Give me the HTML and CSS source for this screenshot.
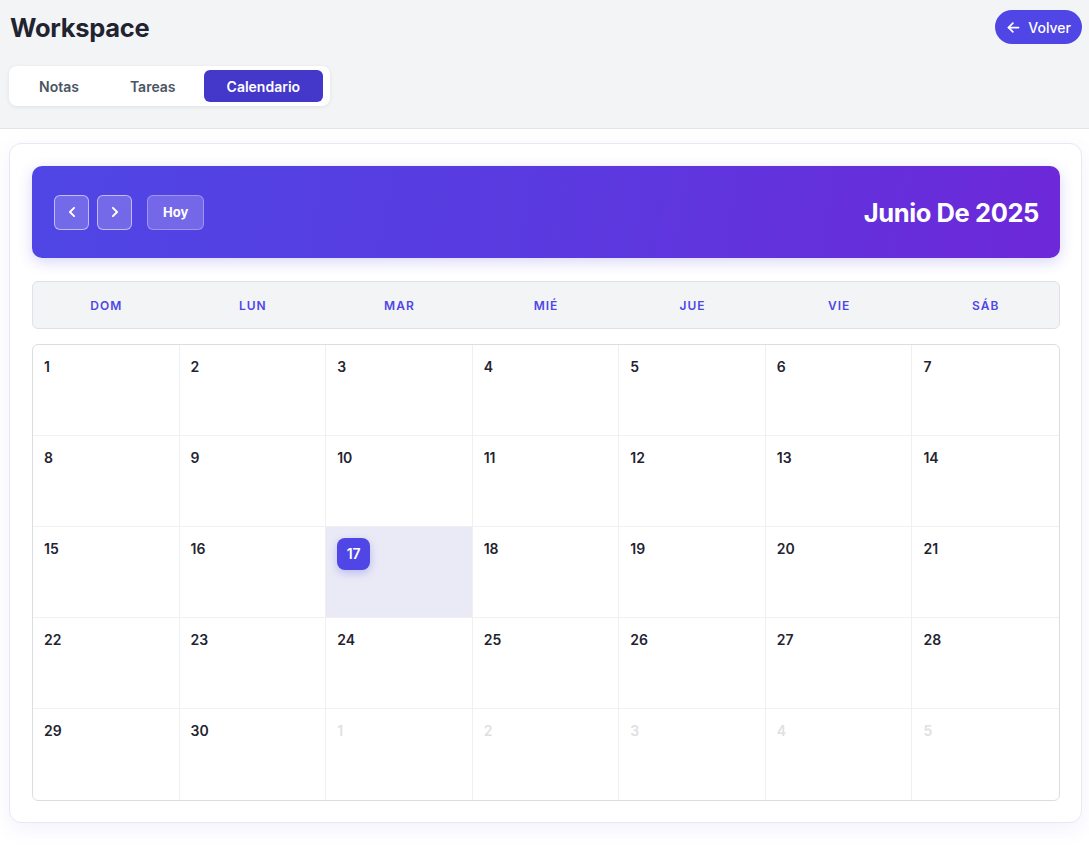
FILE: index.html
```html
<!DOCTYPE html>
<html lang="es">
<head>
<meta charset="utf-8">
<title>Workspace</title>
<link rel="stylesheet" href="styles.css">
</head>
<body>
<header class="top">
  <div class="top-row">
    <h1 class="title">Workspace</h1>
    <button class="back">
      <svg width="15" height="15" viewBox="0 0 24 24" fill="none" stroke="currentColor" stroke-width="2.8" stroke-linecap="round" stroke-linejoin="round"><path d="M20 12H4"/><path d="M11 19l-7-7 7-7"/></svg>
      <span>Volver</span>
    </button>
  </div>
  <nav class="tabs">
    <button class="tab">Notas</button>
    <button class="tab">Tareas</button>
    <button class="tab active">Calendario</button>
  </nav>
</header>

<main class="main">
  <section class="card">
    <div class="cal-head">
      <div class="controls">
        <button class="nav-btn" aria-label="Anterior">
          <svg width="20" height="20" viewBox="0 0 24 24" fill="none" stroke="currentColor" stroke-width="2.3" stroke-linecap="round" stroke-linejoin="round"><path d="M14.5 17l-5-5 5-5"/></svg>
        </button>
        <button class="nav-btn" aria-label="Siguiente">
          <svg width="20" height="20" viewBox="0 0 24 24" fill="none" stroke="currentColor" stroke-width="2.3" stroke-linecap="round" stroke-linejoin="round"><path d="M9.5 17l5-5-5-5"/></svg>
        </button>
        <button class="today-btn">Hoy</button>
      </div>
      <h2 class="month">Junio De 2025</h2>
    </div>

    <div class="weekdays">
      <div>DOM</div><div>LUN</div><div>MAR</div><div>MIÉ</div><div>JUE</div><div>VIE</div><div>SÁB</div>
    </div>

    <div class="grid">
      <div class="cell"><span class="num">1</span></div>
      <div class="cell"><span class="num">2</span></div>
      <div class="cell"><span class="num">3</span></div>
      <div class="cell"><span class="num">4</span></div>
      <div class="cell"><span class="num">5</span></div>
      <div class="cell"><span class="num">6</span></div>
      <div class="cell"><span class="num">7</span></div>

      <div class="cell"><span class="num">8</span></div>
      <div class="cell"><span class="num">9</span></div>
      <div class="cell"><span class="num">10</span></div>
      <div class="cell"><span class="num">11</span></div>
      <div class="cell"><span class="num">12</span></div>
      <div class="cell"><span class="num">13</span></div>
      <div class="cell"><span class="num">14</span></div>

      <div class="cell"><span class="num">15</span></div>
      <div class="cell"><span class="num">16</span></div>
      <div class="cell is-today"><span class="num badge">17</span></div>
      <div class="cell"><span class="num">18</span></div>
      <div class="cell"><span class="num">19</span></div>
      <div class="cell"><span class="num">20</span></div>
      <div class="cell"><span class="num">21</span></div>

      <div class="cell"><span class="num">22</span></div>
      <div class="cell"><span class="num">23</span></div>
      <div class="cell"><span class="num">24</span></div>
      <div class="cell"><span class="num">25</span></div>
      <div class="cell"><span class="num">26</span></div>
      <div class="cell"><span class="num">27</span></div>
      <div class="cell"><span class="num">28</span></div>

      <div class="cell"><span class="num">29</span></div>
      <div class="cell"><span class="num">30</span></div>
      <div class="cell other"><span class="num">1</span></div>
      <div class="cell other"><span class="num">2</span></div>
      <div class="cell other"><span class="num">3</span></div>
      <div class="cell other"><span class="num">4</span></div>
      <div class="cell other"><span class="num">5</span></div>
    </div>
  </section>
</main>
</body>
</html>
```

FILE: styles.css
```css
* { box-sizing: border-box; }

html, body {
  margin: 0;
  padding: 0;
  background: #ffffff;
  font-family: Inter, "Noto Sans", "Liberation Sans", sans-serif;
  color: #1f2937;
}

button {
  font-family: inherit;
  cursor: pointer;
}

.top {
  background: #f3f4f6;
  border-bottom: 1px solid #e2e4e9;
  padding: 10px 7px 22px 9px;
}

.top-row {
  display: flex;
  align-items: center;
  justify-content: space-between;
  height: 34px;
}

.title {
  margin: 0 0 0 1px;
  font-size: 25.5px;
  font-weight: 700;
  color: #1f2430;
  letter-spacing: -0.3px;
}

.back {
  display: flex;
  align-items: center;
  gap: 7px;
  height: 34px;
  padding: 0 11px 0 11px;
  border: none;
  border-radius: 17px;
  background: #4f46e5;
  color: #ffffff;
  font-size: 14px;
  font-weight: 500;
}

.tabs {
  display: inline-flex;
  gap: 5px;
  margin-top: 22px;
  padding: 4px 7px 4px 7px;
  background: #ffffff;
  border-radius: 8px;
  box-shadow: 0 1px 4px rgba(0, 0, 0, 0.08);
}

.tab {
  height: 32px;
  padding: 0 23px;
  border: none;
  border-radius: 6px;
  background: transparent;
  color: #4b5563;
  font-size: 14px;
  font-weight: 600;
}

.tab.active {
  background: #4338ca;
  color: #ffffff;
}

.main {
  padding: 14px 7px 30px 9px;
}

.card {
  background: #ffffff;
  border: 1px solid #e8e8f4;
  border-radius: 12px;
  padding: 22px 21px 21px 22px;
  box-shadow: 0 6px 20px rgba(99, 91, 230, 0.08);
}

.cal-head {
  display: flex;
  align-items: center;
  justify-content: space-between;
  height: 92px;
  padding: 0 21px 0 22px;
  border-radius: 10px;
  background: linear-gradient(100deg, #4f46e5 0%, #5a3ae0 50%, #6d28d9 100%);
  box-shadow: 0 4px 14px rgba(79, 70, 229, 0.22);
  color: #ffffff;
}

.controls {
  display: flex;
  align-items: center;
  gap: 8px;
}

.nav-btn {
  display: flex;
  align-items: center;
  justify-content: center;
  width: 35px;
  height: 35px;
  padding: 0;
  border: 1px solid rgba(255, 255, 255, 0.55);
  border-radius: 6px;
  background: rgba(255, 255, 255, 0.2);
  color: #ffffff;
}

.today-btn {
  height: 35px;
  margin-left: 7px;
  padding: 0 15px;
  border: 1px solid rgba(255, 255, 255, 0.3);
  border-radius: 6px;
  background: rgba(255, 255, 255, 0.2);
  color: #ffffff;
  font-size: 13px;
  font-weight: 700;
}

.month {
  margin: 0;
  font-size: 25.5px;
  font-weight: 700;
  letter-spacing: -0.4px;
}

.weekdays {
  display: grid;
  grid-template-columns: repeat(7, 1fr);
  align-items: center;
  height: 48px;
  margin-top: 23px;
  background: #f3f4f6;
  border: 1px solid #dfe1e6;
  border-radius: 6px;
}

.weekdays div {
  text-align: center;
  font-size: 12px;
  font-weight: 600;
  letter-spacing: 1px;
  color: #4f46e5;
}

.grid {
  display: grid;
  grid-template-columns: repeat(7, 1fr);
  grid-auto-rows: 91px;
  margin-top: 15px;
  border: 1px solid #dcdde2;
  border-radius: 6px;
  overflow: hidden;
}

.cell {
  padding: 11px 11px;
  border-right: 1px solid #f0f0f2;
  border-bottom: 1px solid #f0f0f2;
}

.cell:nth-child(7n) { border-right: none; }
.cell:nth-last-child(-n+7) { border-bottom: none; }

.num {
  display: inline-block;
  font-size: 14px;
  font-weight: 600;
  line-height: 20px;
  color: #1f2430;
}

.cell.other .num {
  color: #dfe0e4;
}

.cell.is-today {
  background: #eaeaf6;
}

.badge {
  width: 33px;
  height: 32px;
  line-height: 32px;
  text-align: center;
  border-radius: 8px;
  background: #4f46e5;
  color: #ffffff;
  box-shadow: 0 3px 8px rgba(79, 70, 229, 0.3);
}
```
